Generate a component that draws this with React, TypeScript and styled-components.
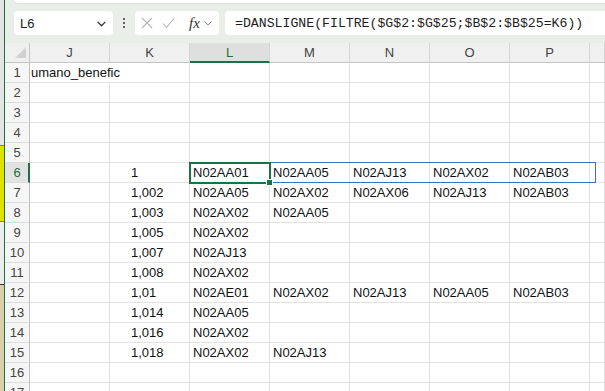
import React from 'react';
import styled, { createGlobalStyle } from 'styled-components';

const GlobalStyle = createGlobalStyle`
  html, body {
    margin: 0;
    padding: 0;
    width: 605px;
    height: 391px;
    overflow: hidden;
    background: #ffffff;
    font-family: "Liberation Sans", Arial, sans-serif;
  }
`;

const Window = styled.div`
  display: flex;
  width: 605px;
  height: 391px;
  overflow: hidden;
`;

// bit of another window peeking out on the left
const BackStrip = styled.div`
  width: 4px;
  flex: none;
  display: flex;
  flex-direction: column;
  background: #ececec;
  border-right: 1px solid #1e7145;
`;

const StripBlock = styled.div<{ $h: number; $bg: string; $edge?: string }>`
  height: ${(p) => p.$h}px;
  flex: none;
  background: ${(p) => p.$bg};
  border-top: ${(p) => (p.$edge ? `1px solid ${p.$edge}` : 'none')};
`;

const Main = styled.div`
  flex: 1;
  display: flex;
  flex-direction: column;
  min-width: 0;
`;

const TopArea = styled.div`
  height: 43px;
  flex: none;
  background: #e9eee9;
  display: flex;
  flex-direction: column;
`;

const RibbonEdge = styled.div`
  height: 3px;
  margin-left: 10px;
  background: #ffffff;
  border-bottom-left-radius: 5px;
  box-shadow: 0 1px 1px rgba(0, 0, 0, 0.06);
`;

const FormulaRow = styled.div`
  display: flex;
  align-items: center;
  gap: 6px;
  padding: 8px 0 0 9px;
`;

const Box = styled.div<{ $w?: number }>`
  height: 24px;
  width: ${(p) => (p.$w ? `${p.$w}px` : 'auto')};
  flex: ${(p) => (p.$w ? 'none' : '1')};
  background: #ffffff;
  border-radius: 4px;
  box-sizing: border-box;
  display: flex;
  align-items: center;
  overflow: hidden;
`;

const NameText = styled.span`
  flex: 1;
  padding-left: 6px;
  font-size: 13px;
  color: #222;
`;

const Dots = styled.div`
  width: 6px;
  display: flex;
  flex-direction: column;
  align-items: center;
  gap: 2px;
  margin: 0 2px;

  span {
    width: 2px;
    height: 2px;
    background: #333;
    border-radius: 1px;
  }
`;

const Fx = styled.span`
  font-family: "Liberation Serif", "Times New Roman", serif;
  font-style: italic;
  font-size: 15px;
  color: #333;
  margin-left: 14px;
`;

const FormulaText = styled.span`
  font-family: "Liberation Mono", "DejaVu Sans Mono", monospace;
  font-size: 13.2px;
  color: #1d1d1d;
  padding-left: 10px;
  white-space: nowrap;
`;

const Sheet = styled.div`
  position: relative;
  display: grid;
  grid-template-columns: 25px repeat(7, 80px) 1fr;
  grid-auto-rows: 20px;
  background: #ffffff;
`;

const Corner = styled.div`
  background: #f0f0f0;
  border-right: 1px solid #c4c4c4;
  border-bottom: 1px solid #c4c4c4;
  box-sizing: border-box;
  position: relative;

  &::after {
    content: '';
    position: absolute;
    right: 3px;
    bottom: 4px;
    width: 0;
    height: 0;
    border-left: 11px solid transparent;
    border-bottom: 11px solid #d2d2d2;
  }
`;

const ColHead = styled.div<{ $active?: boolean }>`
  box-sizing: border-box;
  background: ${(p) => (p.$active ? '#dfdfdf' : '#f0f0f0')};
  border-right: 1px solid #d4d4d4;
  border-bottom: ${(p) => (p.$active ? '2px solid #1e7145' : '1px solid #c4c4c4')};
  color: ${(p) => (p.$active ? '#1e6e40' : '#444')};
  font-size: 13px;
  display: flex;
  align-items: center;
  justify-content: center;
  padding-top: ${(p) => (p.$active ? '1px' : '0')};
`;

const RowHead = styled.div<{ $active?: boolean }>`
  box-sizing: border-box;
  background: ${(p) => (p.$active ? '#e3e3e3' : '#f6f6f6')};
  border-bottom: 1px solid #dcdcdc;
  border-right: ${(p) => (p.$active ? '2px solid #1e7145' : '1px solid #bfbfbf')};
  color: ${(p) => (p.$active ? '#1e6e40' : '#444')};
  font-size: 13px;
  display: flex;
  align-items: center;
  justify-content: center;
  padding-left: ${(p) => (p.$active ? '1px' : '0')};
`;

const Cell = styled.div<{ $indent?: number; $noRight?: boolean }>`
  box-sizing: border-box;
  border-right: ${(p) => (p.$noRight ? 'none' : '1px solid #e1e1e1')};
  border-bottom: 1px solid #e1e1e1;
  font-size: 13px;
  color: #111;
  padding-left: ${(p) => p.$indent ?? 3}px;
  display: flex;
  align-items: center;
  white-space: nowrap;
  overflow: visible;
`;

const Spill = styled.div`
  position: absolute;
  left: 185px;
  top: 119px;
  width: 406px;
  height: 21px;
  box-sizing: border-box;
  border: 1px solid #3d6fc4;
  pointer-events: none;
`;

const Selection = styled.div`
  position: absolute;
  left: 184px;
  top: 119px;
  width: 82px;
  height: 22px;
  box-sizing: border-box;
  border: 2px solid #1e7145;
  pointer-events: none;

  &::after {
    content: '';
    position: absolute;
    right: -4px;
    bottom: -4px;
    width: 5px;
    height: 5px;
    background: #1e7145;
    border: 1px solid #fff;
  }
`;

const columns = ['J', 'K', 'L', 'M', 'N', 'O', 'P', ''];

type Row = { k?: string; codes: string[] };

const rows: Row[] = [
  { codes: [] },
  { codes: [] },
  { codes: [] },
  { codes: [] },
  { codes: [] },
  { k: '1', codes: ['N02AA01', 'N02AA05', 'N02AJ13', 'N02AX02', 'N02AB03'] },
  { k: '1,002', codes: ['N02AA05', 'N02AX02', 'N02AX06', 'N02AJ13', 'N02AB03'] },
  { k: '1,003', codes: ['N02AX02', 'N02AA05'] },
  { k: '1,005', codes: ['N02AX02'] },
  { k: '1,007', codes: ['N02AJ13'] },
  { k: '1,008', codes: ['N02AX02'] },
  { k: '1,01', codes: ['N02AE01', 'N02AX02', 'N02AJ13', 'N02AA05', 'N02AB03'] },
  { k: '1,014', codes: ['N02AA05'] },
  { k: '1,016', codes: ['N02AX02'] },
  { k: '1,018', codes: ['N02AX02', 'N02AJ13'] },
  { codes: [] },
  { codes: [] },
];

const Chevron = ({ size = 10 }: { size?: number }) => (
  <svg width={size} height={size} viewBox="0 0 10 10" fill="none" stroke="#333" strokeWidth="1.2">
    <path d="M1.5 3.5 L5 7 L8.5 3.5" />
  </svg>
);

const App: React.FC = () => {
  return (
    <Window>
      <GlobalStyle />
      <BackStrip>
        <StripBlock $h={145} $bg="#e4e4e4" />
        <StripBlock $h={75} $bg="#e1e100" $edge="#3a8ee6" />
        <StripBlock $h={62} $bg="#ececec" $edge="#3a8ee6" />
        <StripBlock $h={109} $bg="#d9cfa8" $edge="#333" />
      </BackStrip>
      <Main>
        <TopArea>
          <RibbonEdge />
          <FormulaRow>
            <Box $w={99}>
              <NameText>L6</NameText>
              <span style={{ marginRight: 6, display: 'flex' }}>
                <Chevron size={11} />
              </span>
            </Box>
            <Dots>
              <span />
              <span />
              <span />
            </Dots>
            <Box $w={84}>
              <svg width="12" height="12" viewBox="0 0 12 12" style={{ marginLeft: 6 }} stroke="#b5b5b5" strokeWidth="1.1">
                <path d="M1 1 L11 11 M11 1 L1 11" />
              </svg>
              <svg width="13" height="12" viewBox="0 0 13 12" style={{ marginLeft: 9 }} stroke="#b5b5b5" strokeWidth="1.1" fill="none">
                <path d="M1 6.5 L4.5 10.5 L12 1.5" />
              </svg>
              <Fx>fx</Fx>
              <span style={{ marginLeft: 3, display: 'flex' }}>
                <svg width="10" height="10" viewBox="0 0 10 10" fill="none" stroke="#888" strokeWidth="1">
                  <path d="M1.5 3.5 L5 7 L8.5 3.5" />
                </svg>
              </span>
            </Box>
            <Box style={{ borderRadius: '4px 0 0 4px' }}>
              <FormulaText>=DANSLIGNE(FILTRE($G$2:$G$25;$B$2:$B$25=K6))</FormulaText>
            </Box>
          </FormulaRow>
        </TopArea>
        <Sheet>
          <Corner />
          {columns.map((c, i) => (
            <ColHead key={i} $active={c === 'L'}>
              {c}
            </ColHead>
          ))}
          {rows.map((r, ri) => {
            const n = ri + 1;
            return (
              <React.Fragment key={n}>
                <RowHead $active={n === 6}>{n}</RowHead>
                <Cell $noRight={n === 1} $indent={1}>
                  {n === 1 ? 'umano_benefic' : ''}
                </Cell>
                <Cell $indent={21}>{r.k ?? ''}</Cell>
                {[0, 1, 2, 3, 4].map((ci) => (
                  <Cell key={ci}>{r.codes[ci] ?? ''}</Cell>
                ))}
                <Cell />
              </React.Fragment>
            );
          })}
          <Spill />
          <Selection />
        </Sheet>
      </Main>
    </Window>
  );
};

export default App;
